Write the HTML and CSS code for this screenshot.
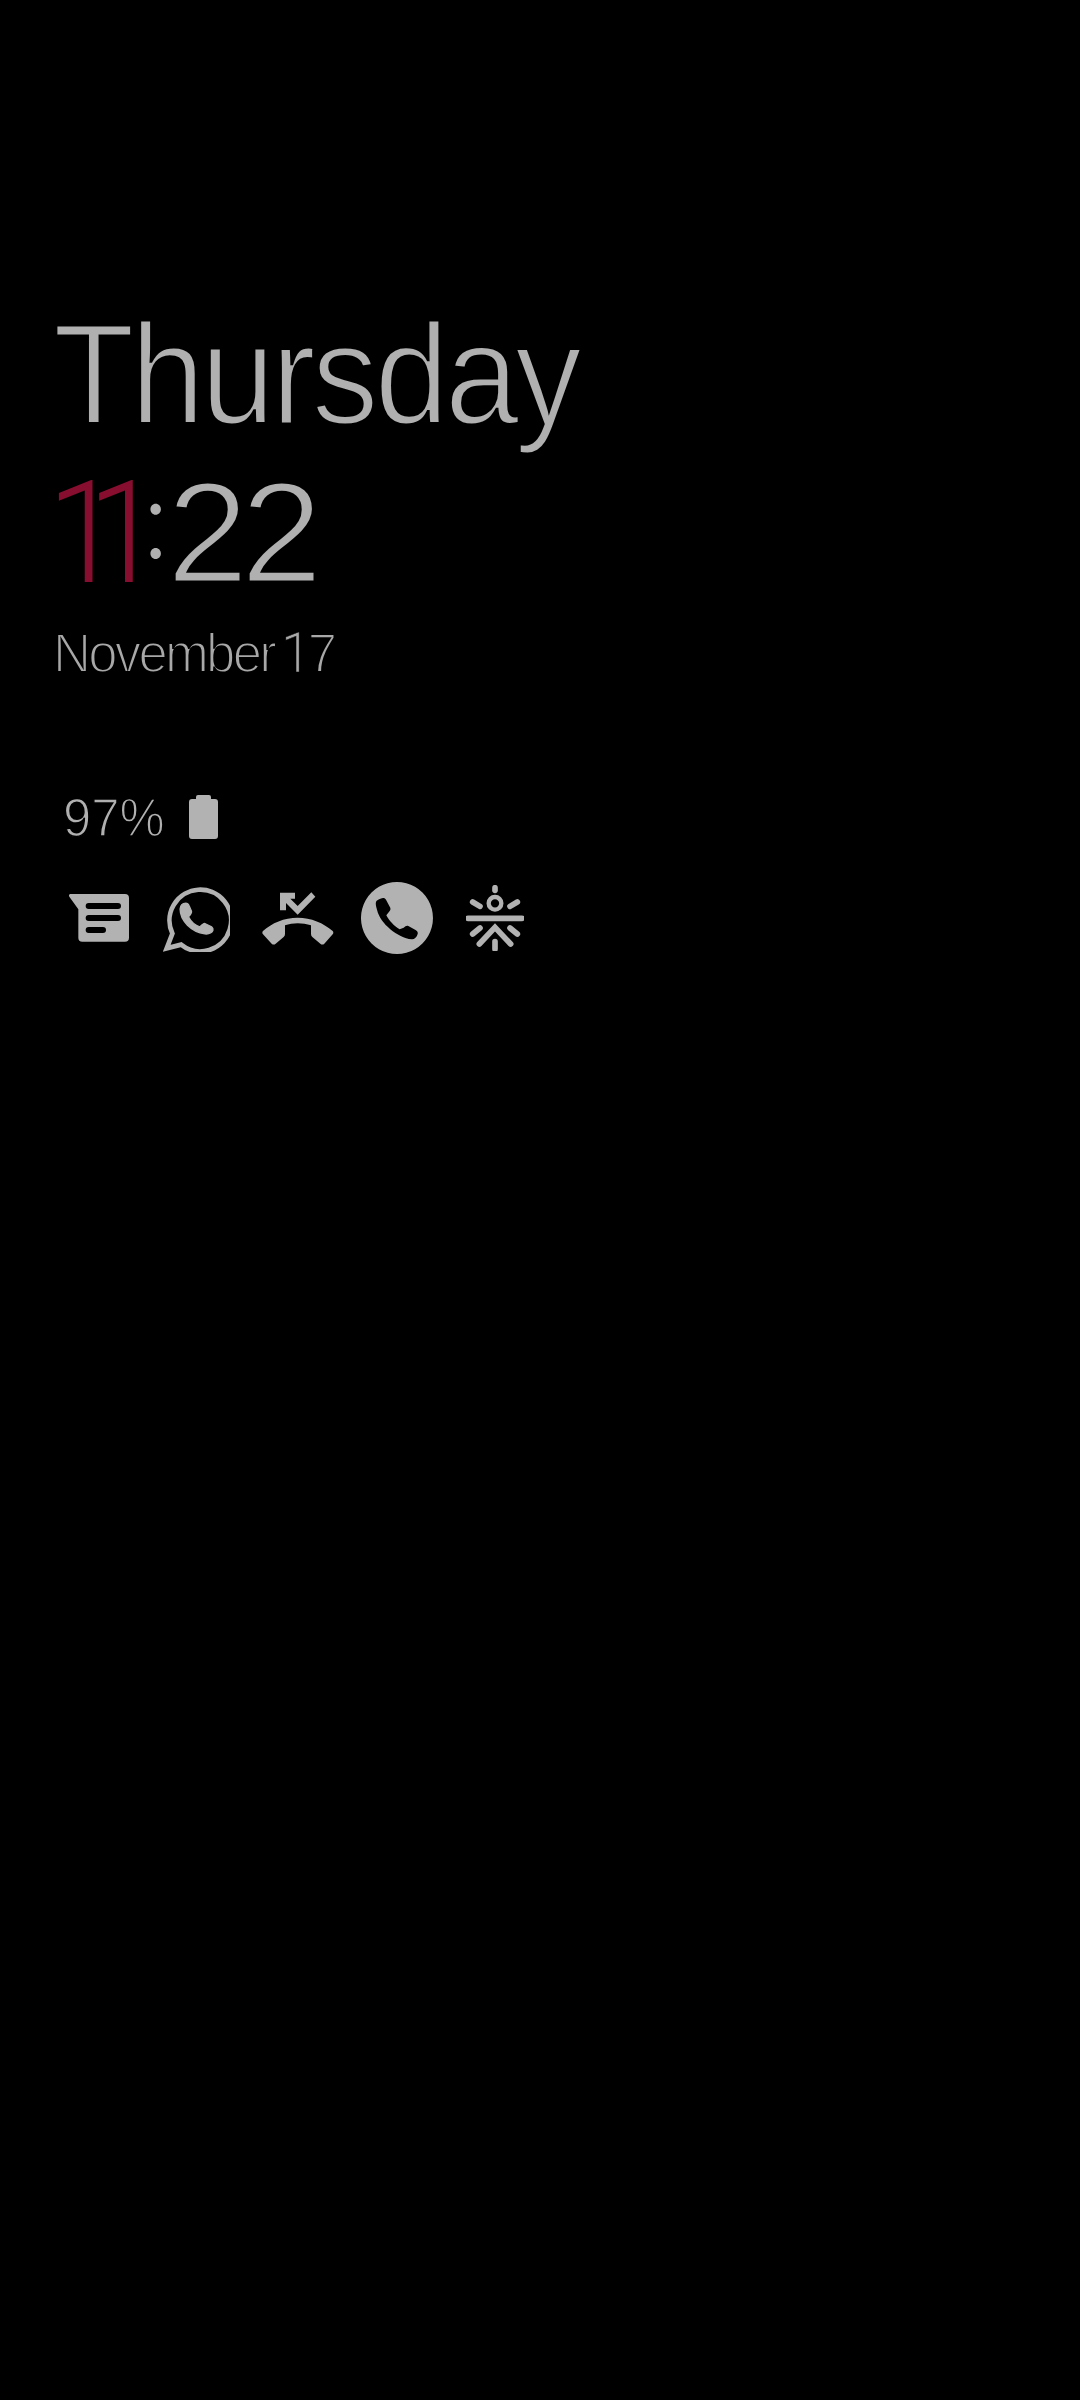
FILE: index.html
```html
<!DOCTYPE html>
<html lang="en">
<head>
<meta charset="utf-8">
<title>Always on display</title>
<link rel="stylesheet" href="styles.css">
</head>
<body>
<main class="screen">
  <div class="day">Thursday</div>
  <div class="time"><span class="hour">11</span><span class="colon">:</span><span class="min">22</span></div>
  <div class="date">November <span class="one">1</span>7</div>
  <div class="battery">
    <span class="pct">97%</span>
    <svg class="batt" viewBox="0 0 29 44"><path class="f" d="M9 0h11a2 2 0 0 1 2 2v2h4a3 3 0 0 1 3 3v34a3 3 0 0 1-3 3H3a3 3 0 0 1-3-3V7a3 3 0 0 1 3-3h4V2a2 2 0 0 1 2-2z"/></svg>
  </div>
  <div class="icons">
    <svg class="i-msg" viewBox="57 375 180 144"><path class="f" fill-rule="evenodd" d="M63 375H225a12 12 0 0 1 12 12V506a12 12 0 0 1-12 12H97a12 12 0 0 1-12-12V421L58 383a5 5 0 0 1 5-8zM116 402a6 6 0 0 0 0 18H204a6 6 0 0 0 0-18zM116 438a6 6 0 0 0 0 18H204a6 6 0 0 0 0-18zM116 474a6 6 0 0 0 0 18H159a6 6 0 0 0 0-18z"/></svg>
    <svg class="i-wa" viewBox="345 348 200 200"><path class="s" stroke-width="14" stroke-linejoin="miter" d="M356 537L373 493A92 92 0 1 1 399 526Z"/><path class="f h" d="M396 420C397 408 404 402 413 402C418 402 421 405 423 410L430 426C431 430 427 437 421 443C427 455 440 468 455 473C461 467 466 462 470 463L490 473C494 476 495 480 494 484C490 492 480 495 470 494C430 488 396 455 396 420Z"/></svg>
    <svg class="i-miss" viewBox="33 70 216 159"><path class="f" d="M87 72H132V90H118L140 112L181 71L193 84L140 138L105 103V125H87Z"/><path class="f" d="M140 147C100 147 62 163 36 187Q32 192 36 197L62 225Q68 230 74 225L98 205Q102 202 102 196V170C125 162 155 162 180 170V196Q180 202 184 205L208 225Q214 230 220 225L245 197Q249 192 245 187C218 163 180 147 140 147Z"/></svg>
    <svg class="i-call" viewBox="330 39 216 216"><path class="f" fill-rule="evenodd" d="M438 39A108 108 0 1 1 437.9 39ZM377 95C372 100 375 112 378 122C388 165 440 205 482 211C490 212 497 205 500 195C501 190 499 187 495 184L472 171C467 169 463 172 458 176L446 181C430 172 414 155 406 139L416 126C419 122 419 119 417 115L405 92C401 85 393 84 377 95Z"/></svg>
    <svg class="i-sun" viewBox="648 48 174 198">
      <g class="r">
        <path d="M735 56V64"/><path d="M668 99L690 112"/><path d="M802 99L780 112"/>
        <path d="M654 148H816"/>
        <path d="M668 195L690 177"/><path d="M802 195L780 177"/>
        <path d="M688 225L735 175L782 225"/><path d="M735 218V240"/>
      </g>
      <circle class="ring" cx="735" cy="103" r="19"/>
    </svg>
  </div>
</main>
</body>
</html>
```
FILE: styles.css
```css
html, body { margin: 0; padding: 0; background: #000; }
.screen {
  width: 1080px;
  height: 2400px;
  box-sizing: border-box;
  padding: 300px 0 0 53px;
  background: #000;
  color: #b0b0b0;
  font-family: "Liberation Sans", Arial, sans-serif;
  overflow: hidden;
}
.day, .time, .date, .pct {
  -webkit-text-stroke-color: #000;
  white-space: nowrap;
  transform-origin: 0 50%;
  transform: scaleX(0.94);
}
.day { font-size: 142px; line-height: 150px; letter-spacing: -4.2px; -webkit-text-stroke-width: 3px; }
.time { font-size: 142px; line-height: 150px; margin-top: 8px; -webkit-text-stroke-width: 3px; }
.hour { color: #870e2f; font-family: Roboto, sans-serif; font-weight: 300; letter-spacing: -36px; margin-left: -6px; margin-right: 11px; -webkit-text-stroke-width: 0; }
.colon { font-family: Inter, sans-serif; font-weight: 300; font-size: 105px; vertical-align: 24px; line-height: 1; letter-spacing: 0; margin-left: 4px; margin-right: -3px; -webkit-text-stroke-width: 0; }
.min { display: inline-block; letter-spacing: -7.5px; transform: scaleX(1.1); transform-origin: 0 50%; }
.date { font-size: 56px; line-height: 64px; letter-spacing: -2.9px; word-spacing: -5px; color: #a8a8a8; margin-top: 12px; -webkit-text-stroke-width: 2px; }
.one { font-family: Roboto, sans-serif; font-weight: 300; -webkit-text-stroke-width: 0.5px; }
.battery { display: flex; align-items: center; margin-top: 106px; padding-left: 10px; height: 52px; }
.pct { font-size: 54px; line-height: 52px; -webkit-text-stroke-width: 1.5px; display: block; width: 126px; }
.batt { width: 29px; height: 44px; }
.icons { display: flex; align-items: center; margin-top: 39px; padding-left: 16px; height: 72px; }
.icons svg { display: block; flex: none; }
.i-msg { width: 60px; height: 48px; margin-right: 33.5px; }
.i-wa { width: 67px; height: 67px; margin-right: 32.5px; }
.i-miss { width: 72px; height: 53px; margin-right: 26.5px; }
.i-call { width: 72px; height: 72px; margin-right: 33px; }
.i-sun { width: 58px; height: 66px; }
.f { fill: #b2b2b2; }
.h { stroke: #b2b2b2; stroke-width: 4; }
.s { fill: none; stroke: #b2b2b2; }
.r path { fill: none; stroke: #b2b2b2; stroke-width: 17; stroke-linecap: round; stroke-linejoin: miter; }
.ring { fill: none; stroke: #b2b2b2; stroke-width: 13; }
```
